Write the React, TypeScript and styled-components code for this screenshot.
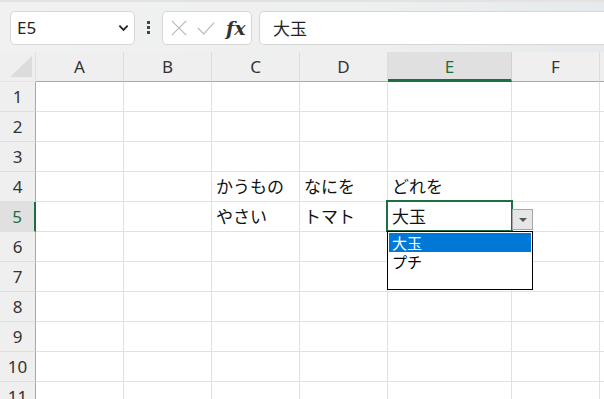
import React from "react";
import styled, { createGlobalStyle } from "styled-components";

const GlobalStyle = createGlobalStyle`
  html, body {
    margin: 0;
    padding: 0;
    background: #ffffff;
    overflow: hidden;
  }
  * { box-sizing: border-box; }
`;

const COLS = [
  { key: "A", width: 88 },
  { key: "B", width: 88 },
  { key: "C", width: 88 },
  { key: "D", width: 88 },
  { key: "E", width: 124 },
  { key: "F", width: 88 },
  { key: "", width: 88 },
];

const ROWS = [1, 2, 3, 4, 5, 6, 7, 8, 9, 10, 11];

const DATA: Record<string, string> = {
  C4: "かうもの",
  D4: "なにを",
  E4: "どれを",
  C5: "やさい",
  D5: "トマト",
  E5: "大玉",
};

const ACTIVE_COL = "E";
const ACTIVE_ROW = 5;

export default function App() {
  const template = `36px ${COLS.map((c) => c.width + "px").join(" ")}`;
  return (
    <Page>
      <GlobalStyle />
      <Toolbar>
        <NameBox>
          <NameText>E5</NameText>
          <Chevron viewBox="0 0 12 8">
            <path d="M1.5 1.5 L6 6 L10.5 1.5" />
          </Chevron>
        </NameBox>
        <Dots>
          <span />
          <span />
          <span />
        </Dots>
        <FxBox>
          <FxIcon viewBox="0 0 20 20">
            <path d="M2 2 L18 18 M18 2 L2 18" />
          </FxIcon>
          <FxIcon viewBox="0 0 20 20">
            <path d="M1 10 L7.5 16.5 L19 4" />
          </FxIcon>
          <FxLabel>fx</FxLabel>
        </FxBox>
        <FormulaInput>大玉</FormulaInput>
      </Toolbar>

      <Sheet style={{ gridTemplateColumns: template }}>
        <Corner>
          <CornerTriangle />
        </Corner>
        {COLS.map((c, i) => (
          <ColHeader key={"h" + i} $active={c.key === ACTIVE_COL}>
            {c.key}
          </ColHeader>
        ))}
        {ROWS.map((r) => (
          <React.Fragment key={r}>
            <RowHeader $active={r === ACTIVE_ROW}>{r}</RowHeader>
            {COLS.map((c, i) => {
              const id = c.key + r;
              const active = c.key === ACTIVE_COL && r === ACTIVE_ROW;
              return (
                <Cell key={i} $active={active}>
                  {c.key && DATA[id]}
                  {active && (
                    <>
                      <ActiveFrame />
                      <DropButton>
                        <DropArrow />
                      </DropButton>
                      <DropList>
                        <DropItem $selected>大玉</DropItem>
                        <DropItem>プチ</DropItem>
                      </DropList>
                    </>
                  )}
                </Cell>
              );
            })}
          </React.Fragment>
        ))}
      </Sheet>
    </Page>
  );
}

const Page = styled.div`
  width: 604px;
  height: 399px;
  overflow: hidden;
  font-family: "Noto Sans", "Noto Sans CJK JP", sans-serif;
`;

const Toolbar = styled.div`
  height: 52px;
  display: flex;
  align-items: center;
  padding: 1px 0 0 10px;
  background: linear-gradient(90deg, #f1f1f1 0%, #eeefef 60%, #e6eaec 100%);
  border-top: 2px solid #e2e2e2;
`;

const NameBox = styled.div`
  width: 125px;
  height: 34px;
  background: #fff;
  border: 1px solid #d6d6d6;
  border-radius: 5px;
  display: flex;
  align-items: center;
  justify-content: space-between;
  padding: 0 5px 0 6px;
`;

const NameText = styled.span`
  font-size: 17px;
  color: #222;
`;

const Chevron = styled.svg`
  width: 11px;
  height: 8px;
  fill: none;
  stroke: #222;
  stroke-width: 2;
`;

const Dots = styled.div`
  width: 27px;
  display: flex;
  flex-direction: column;
  align-items: center;
  gap: 2px;
  span {
    width: 3px;
    height: 3px;
    background: #444;
  }
`;

const FxBox = styled.div`
  width: 90px;
  height: 34px;
  background: #fff;
  border: 1px solid #d6d6d6;
  border-radius: 5px;
  display: flex;
  align-items: center;
  gap: 9px;
  padding: 0 0 0 7px;
`;

const FxIcon = styled.svg`
  width: 18px;
  height: 18px;
  fill: none;
  stroke: #b8b8b8;
  stroke-width: 1.3;
`;

const FxLabel = styled.span`
  font-family: "DejaVu Serif", "Liberation Serif", serif;
  font-style: italic;
  font-weight: bold;
  font-size: 19px;
  color: #333;
  margin-left: 2px;
`;

const FormulaInput = styled.div`
  flex: 1;
  height: 34px;
  margin-left: 7px;
  background: #fff;
  border: 1px solid #d6d6d6;
  border-right: none;
  border-radius: 5px 0 0 5px;
  display: flex;
  align-items: center;
  padding-left: 13px;
  font-family: "Noto Sans CJK JP", sans-serif;
  font-size: 17px;
  color: #222;
`;

const Sheet = styled.div`
  display: grid;
  grid-template-rows: 30px repeat(11, 30px);
`;

const Corner = styled.div`
  background: #efefef;
  border-bottom: 1px solid #e4e4e4;
  border-right: 1px solid #e0e0e0;
  position: relative;
`;

const CornerTriangle = styled.div`
  position: absolute;
  left: 10px;
  top: 4px;
  width: 22px;
  height: 21px;
  background: #dcdcdc;
  clip-path: polygon(100% 0, 100% 100%, 0 100%);
`;

const ColHeader = styled.div<{ $active?: boolean }>`
  background: ${(p) => (p.$active ? "#e0e0e0" : "#efefef")};
  border-right: 1px solid ${(p) => (p.$active ? "#d0d0d0" : "#dcdcdc")};
  border-bottom: ${(p) => (p.$active ? "3px solid #1e6e42" : "1px solid #a8a8a8")};
  padding-top: ${(p) => (p.$active ? "2px" : "0")};
  display: flex;
  align-items: center;
  justify-content: center;
  font-size: 17px;
  color: ${(p) => (p.$active ? "#1e6e42" : "#333")};
`;

const RowHeader = styled.div<{ $active?: boolean }>`
  background: ${(p) => (p.$active ? "#e0e0e0" : "#efefef")};
  border-bottom: 1px solid #dedede;
  border-right: ${(p) => (p.$active ? "2px solid #1e6e42" : "1px solid #a8a8a8")};
  display: flex;
  align-items: center;
  justify-content: center;
  font-size: 17px;
  color: ${(p) => (p.$active ? "#1e6e42" : "#333")};
`;

const Cell = styled.div<{ $active?: boolean }>`
  position: relative;
  border-right: 1px solid #e1e1e1;
  border-bottom: 1px solid #e1e1e1;
  display: flex;
  align-items: flex-end;
  padding: 0 0 3px 4px;
  font-family: "Noto Sans CJK JP", sans-serif;
  font-size: 17px;
  line-height: 24px;
  color: #111;
  white-space: nowrap;
  z-index: ${(p) => (p.$active ? 2 : 1)};
`;

const ActiveFrame = styled.div`
  position: absolute;
  left: -2px;
  top: -2px;
  right: -2px;
  bottom: -1px;
  border: 2px solid #1e6e42;
  pointer-events: none;
`;

const DropButton = styled.div`
  position: absolute;
  left: 124px;
  top: 7px;
  width: 21px;
  height: 21px;
  background: #e6e6e6;
  border: 1px solid #a6a6a6;
  display: flex;
  align-items: center;
  justify-content: center;
`;

const DropArrow = styled.div`
  width: 0;
  height: 0;
  border-left: 4px solid transparent;
  border-right: 4px solid transparent;
  border-top: 4px solid #555;
  margin-top: 1px;
`;

const DropList = styled.div`
  position: absolute;
  left: -1px;
  top: 29px;
  width: 146px;
  height: 59px;
  background: #fff;
  border: 1px solid #000;
  padding: 1px 1px 0 1px;
  display: flex;
  flex-direction: column;
`;

const DropItem = styled.div<{ $selected?: boolean }>`
  height: 19px;
  line-height: 19px;
  padding-left: 3px;
  font-size: 15px;
  color: ${(p) => (p.$selected ? "#fff" : "#000")};
  background: ${(p) => (p.$selected ? "#0078d7" : "transparent")};
`;
